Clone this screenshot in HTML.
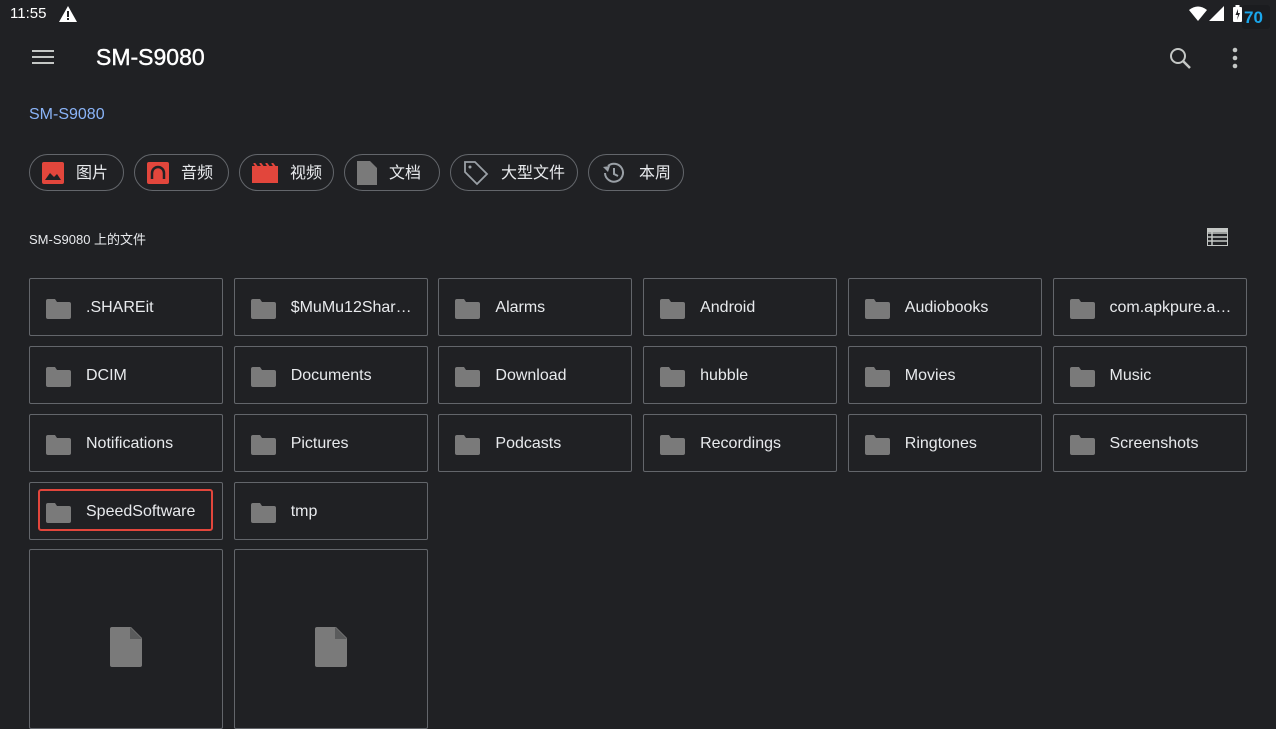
<!DOCTYPE html>
<html><head><meta charset="utf-8"><style>
*{margin:0;padding:0;box-sizing:border-box}
body{width:1276px;height:718px;overflow:hidden;background:#202124;font-family:"Liberation Sans","Noto Sans CJK SC",sans-serif;color:#e8eaed;position:relative}
.a{position:absolute}
.chip{position:absolute;top:154px;height:37px;border:1px solid #63666b;border-radius:19px;display:flex;align-items:center;padding-left:12px;padding-bottom:3px;font-size:16px;color:#e8eaed}
.chip svg{margin-right:12px;margin-top:3px}
.card{position:absolute;width:194px;height:58px;border:1px solid #63666b;border-radius:2px;font-size:16px;color:#e8eaed}
.card svg{position:absolute;left:16px;top:20px}
.card span{position:absolute;left:56px;top:20px;white-space:nowrap}
.big{position:absolute;top:549px;width:194px;height:180px;border:1px solid #63666b;border-radius:2px}
</style></head><body>
<div class="a" style="left:10px;top:5px;font-size:15px;color:#fff">11:55</div>
<svg class="a" style="left:59px;top:6px" width="18" height="16" viewBox="0 0 18 16"><path d="M9 0L18 16H0Z" fill="#fff"/><rect x="8" y="5" width="2" height="6" fill="#202124"/><rect x="8" y="12" width="2" height="2" fill="#202124"/></svg>
<svg class="a" style="left:1189px;top:6px" width="18" height="15" viewBox="0 0 18 15"><path d="M0 4Q9-3 18 4L9 15Z" fill="#fff"/></svg>
<svg class="a" style="left:1209px;top:6px" width="15" height="15"><path d="M15 0V15H0Z" fill="#fff"/></svg>
<svg class="a" style="left:1233px;top:5px" width="9" height="17"><rect x="2.5" y="0" width="4" height="2" fill="#fff"/><rect x="0" y="2" width="9" height="15" rx="1" fill="#fff"/><path d="M5 4L2.5 10H5L4 15L7 8H5Z" fill="#202124"/></svg>
<div class="a" style="left:1242px;top:5px;width:28px;height:24px;background:#1b1c1f;border-radius:3px;color:#1aa7ec;font-weight:bold;font-size:17px;padding-left:2px;padding-top:3px">70</div>
<svg class="a" style="left:32px;top:49px" width="22" height="16"><rect y="1" width="22" height="2" fill="#c4c7c5"/><rect y="7" width="22" height="2" fill="#c4c7c5"/><rect y="13" width="22" height="2" fill="#c4c7c5"/></svg>
<div class="a" style="left:96px;top:44px;font-size:23px;color:#fff;font-weight:500;-webkit-text-stroke:0.4px #fff">SM-S9080</div>
<svg class="a" style="left:1168px;top:46px" width="24" height="24"><circle cx="10" cy="10" r="7" stroke="#c4c7c5" stroke-width="2" fill="none"/><path d="M15 15L22 22" stroke="#c4c7c5" stroke-width="2.5"/></svg>
<svg class="a" style="left:1231px;top:47px" width="8" height="22"><circle cx="4" cy="3" r="2.3" fill="#c4c7c5"/><circle cx="4" cy="11" r="2.3" fill="#c4c7c5"/><circle cx="4" cy="19" r="2.3" fill="#c4c7c5"/></svg>
<div class="a" style="left:29px;top:106px;font-size:16px;color:#8ab4f8">SM-S9080</div>

<div class="chip" style="left:29px;width:95px"><svg width="22" height="22"><rect width="22" height="22" rx="2" fill="#e2463c"/><path d="M3 18L8 11L12 15L15 12L19 18Z" fill="#202124"/></svg>图片</div>
<div class="chip" style="left:134px;width:95px"><svg width="22" height="22"><rect width="22" height="22" rx="2" fill="#e2463c"/><path d="M5 17V11A6 6 0 0 1 17 11V17" stroke="#202124" stroke-width="2.5" fill="none"/></svg>音频</div>
<div class="chip" style="left:239px;width:95px"><svg width="26" height="20"><rect y="3" width="26" height="17" fill="#e2463c"/><path d="M2 0l3 4M8 0l3 4M14 0l3 4M20 0l3 4" stroke="#e2463c" stroke-width="2"/></svg>视频</div>
<div class="chip" style="left:344px;width:96px"><svg width="20" height="24"><path d="M0 0H13L20 7V24H0Z" fill="#7a7a7a"/></svg>文档</div>
<div class="chip" style="left:450px;width:128px"><svg width="26" height="26"><path d="M2 2H12L24 14L14 24L2 12Z" stroke="#9aa0a6" stroke-width="1.8" fill="none"/><circle cx="7" cy="7" r="1.5" fill="#9aa0a6"/></svg>大型文件</div>
<div class="chip" style="left:588px;width:96px"><svg width="26" height="26"><path d="M4 13A9 9 0 1 0 7 6" stroke="#9aa0a6" stroke-width="2" fill="none"/><path d="M2 7L7 12L9 6Z" fill="#9aa0a6"/><path d="M13 8V14L17 16" stroke="#9aa0a6" stroke-width="2" fill="none"/></svg>本周</div>

<div class="a" style="left:29px;top:229px;font-size:13px;color:#e8eaed">SM-S9080 上的文件</div>
<svg class="a" style="left:1207px;top:228px" width="21" height="18"><rect x=".5" y=".5" width="20" height="17" fill="none" stroke="#c4c7c5"/><path d="M1 5H20M1 9H20M1 13H20M5 1V17" stroke="#c4c7c5" stroke-width="1.5"/><rect x="1" y="1" width="19" height="3" fill="#c4c7c5"/></svg>

<div id="g"></div>
<div class="big" style="left:29px"><svg class="a" style="left:80px;top:77px" width="32" height="40"><path d="M0 2Q0 0 2 0H21L32 11V38Q32 40 30 40H2Q0 40 0 38Z" fill="#7a7a7a"/><path d="M20 0V12H32" fill="#202124" opacity=".35"/></svg></div>
<div class="big" style="left:234px"><svg class="a" style="left:80px;top:77px" width="32" height="40"><path d="M0 2Q0 0 2 0H21L32 11V38Q32 40 30 40H2Q0 40 0 38Z" fill="#7a7a7a"/><path d="M20 0V12H32" fill="#202124" opacity=".35"/></svg></div>
<div class="a" style="left:38px;top:489px;width:175px;height:42px;border:2px solid #e2463c;border-radius:3px"></div>
<script>
var n=[".SHAREit","$MuMu12Shar…","Alarms","Android","Audiobooks","com.apkpure.a…","DCIM","Documents","Download","hubble","Movies","Music","Notifications","Pictures","Podcasts","Recordings","Ringtones","Screenshots","SpeedSoftware","tmp"];
var h="";n.forEach(function(t,i){var x=29+(i%6)*204.7,y=278+Math.floor(i/6)*68;
h+='<div class="card" style="left:'+x+'px;top:'+y+'px"><svg width="25" height="20"><path d="M0 2Q0 0 2 0H9L11 3H23Q25 3 25 5V18Q25 20 23 20H2Q0 20 0 18Z" fill="#7a7a7a"/></svg><span>'+t+'</span></div>';});
document.getElementById("g").innerHTML=h;
</script>
</body></html>
